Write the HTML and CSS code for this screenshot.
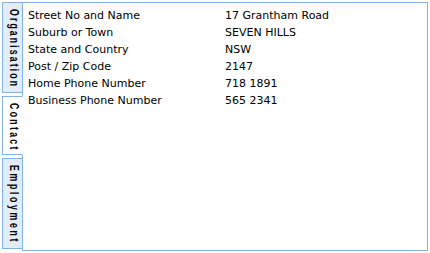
FILE: index.html
```html
<!DOCTYPE html>
<html>
<head>
<meta charset="utf-8">
<link rel="stylesheet" href="styles.css">
</head>
<body>
<div class="wrap">
  <div class="tabs">
    <div class="tab tab-org"><span class="tab-label">Organisation</span></div>
    <div class="tab tab-contact active"><span class="tab-label">Contact</span></div>
    <div class="tab tab-emp"><span class="tab-label">Employment</span></div>
  </div>
  <div class="panel">
    <div class="grid">
      <div class="label">Street No and Name</div><div class="value">17 Grantham Road</div>
      <div class="label">Suburb or Town</div><div class="value">SEVEN HILLS</div>
      <div class="label">State and Country</div><div class="value">NSW</div>
      <div class="label">Post / Zip Code</div><div class="value">2147</div>
      <div class="label">Home Phone Number</div><div class="value">718 1891</div>
      <div class="label">Business Phone Number</div><div class="value">565 2341</div>
    </div>
  </div>
</div>
</body>
</html>
```
FILE: styles.css
```css
html, body {
  margin: 0;
  padding: 0;
  background: #ffffff;
}
.wrap {
  display: flex;
  padding: 2px 0 0 2px;
  width: 426px;
  height: 249px;
}
.tabs {
  display: flex;
  flex-direction: column;
  gap: 3px;
  width: 21px;
  margin-right: -1px;
  position: relative;
  z-index: 1;
}
.tab {
  box-sizing: border-box;
  border: 1px solid #80b3e6;
  background: #e2edf9;
  display: flex;
  justify-content: center;
  align-items: flex-start;
  padding-top: 6px;
  overflow: hidden;
}
.tab-org { height: 91px; }
.tab-contact { height: 59px; }
.tab-emp { height: 91px; }
.tab.active {
  background: #ffffff;
  border-right-color: #ffffff;
}
.tab-label {
  writing-mode: vertical-rl;
  font-family: "Liberation Sans", Arial, sans-serif;
  font-weight: bold;
  font-size: 12.5px;
  letter-spacing: 3px;
  color: #000000;
  line-height: 13px;
  margin-left: 1px;
  flex-shrink: 0;
  transform: scaleY(0.7);
  transform-origin: top center;
}
.tab-contact .tab-label { letter-spacing: 3.3px; }
.tab-emp .tab-label { letter-spacing: 3.8px; }
.panel {
  flex: 1;
  box-sizing: border-box;
  border: 1px solid #80b3e6;
  background: #ffffff;
  padding: 4px 0 0 5px;
}
.grid {
  display: grid;
  grid-template-columns: 197px auto;
  font-family: "DejaVu Sans", Verdana, sans-serif;
  font-size: 11px;
  line-height: 17px;
  color: #000000;
}
```
